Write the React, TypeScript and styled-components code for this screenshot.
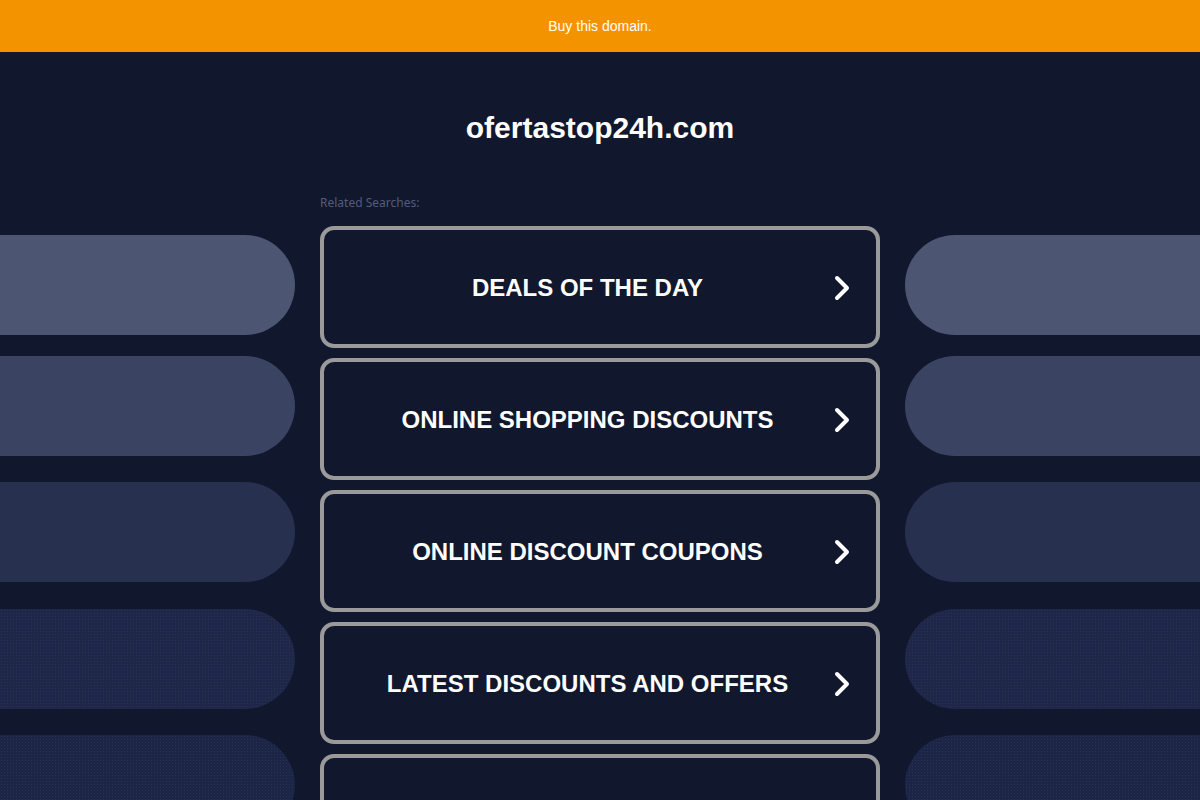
import React from 'react';
import styled, { createGlobalStyle } from 'styled-components';

const GlobalStyle = createGlobalStyle`
  html, body {
    margin: 0;
    padding: 0;
    background: #11172c;
    overflow: hidden;
  }
`;

const Page = styled.div`
  width: 1200px;
  height: 800px;
  overflow: hidden;
  background: #11172c;
  font-family: 'Liberation Sans', Arial, sans-serif;
`;

const TopBar = styled.div`
  height: 52px;
  background: #f39300;
  display: flex;
  align-items: center;
  justify-content: center;
  color: #fff;
  font-size: 14px;
`;

const Domain = styled.h1`
  margin: 0;
  padding-top: 59px;
  height: 34px;
  line-height: 34px;
  text-align: center;
  color: #fff;
  font-size: 30px;
  font-weight: 700;
`;

const Main = styled.div`
  display: grid;
  grid-template-columns: 1fr 560px 1fr;
  column-gap: 25px;
  margin-top: 50px;
`;

const Side = styled.div`
  display: flex;
  flex-direction: column;
  padding-top: 40px;
`;

const Pill = styled.div<{ $color: string; $side: 'left' | 'right'; $top: number; $dots?: boolean }>`
  height: 100px;
  margin-top: ${(p) => p.$top}px;
  background-color: ${(p) => p.$color};
  background-image: ${(p) =>
    p.$dots ? 'radial-gradient(rgba(60, 75, 120, 0.35) 0.6px, transparent 0.8px)' : 'none'};
  background-size: 3px 3px;
  border-radius: ${(p) => (p.$side === 'left' ? '0 50px 50px 0' : '50px 0 0 50px')};
`;

const Center = styled.div`
  display: flex;
  flex-direction: column;
`;

const Label = styled.div`
  font-family: 'Noto Sans', 'Open Sans', sans-serif;
  font-size: 12px;
  line-height: 16px;
  color: #525c7c;
  margin-bottom: 15px;
`;

const Results = styled.div`
  display: flex;
  flex-direction: column;
  gap: 10px;
`;

const ResultBox = styled.a`
  box-sizing: border-box;
  height: 122px;
  border: 4px solid #9a9a9a;
  border-radius: 14px;
  display: flex;
  align-items: center;
  padding: 2px 25px 0 26px;
  text-decoration: none;
  cursor: pointer;
`;

const ResultText = styled.span`
  flex: 1;
  margin-right: 8px;
  text-align: center;
  color: #fff;
  font-size: 24px;
  font-weight: 700;
`;

const Chevron = () => (
  <svg width="18" height="26" viewBox="0 0 18 26">
    <polyline
      points="4,3 14,13 4,23"
      fill="none"
      stroke="#fff"
      strokeWidth="4"
      strokeLinecap="round"
      strokeLinejoin="round"
    />
  </svg>
);

const pills = [
  { color: '#4c5672', top: 0 },
  { color: '#3a4361', top: 21 },
  { color: '#283050', top: 26 },
  { color: '#1e2748', top: 27, dots: true },
  { color: '#1c2545', top: 26, dots: true },
];

const searches = [
  'DEALS OF THE DAY',
  'ONLINE SHOPPING DISCOUNTS',
  'ONLINE DISCOUNT COUPONS',
  'LATEST DISCOUNTS AND OFFERS',
  'BEST ONLINE DEALS',
];

const App = () => {
  return (
    <Page>
      <GlobalStyle />
      <TopBar>Buy this domain.</TopBar>
      <Domain>ofertastop24h.com</Domain>
      <Main>
        <Side>
          {pills.map((p, i) => (
            <Pill key={i} $color={p.color} $top={p.top} $dots={p.dots} $side='left' />
          ))}
        </Side>
        <Center>
          <Label>Related Searches:</Label>
          <Results>
            {searches.map((s) => (
              <ResultBox key={s}>
                <ResultText>{s}</ResultText>
                <Chevron />
              </ResultBox>
            ))}
          </Results>
        </Center>
        <Side>
          {pills.map((p, i) => (
            <Pill key={i} $color={p.color} $top={p.top} $dots={p.dots} $side='right' />
          ))}
        </Side>
      </Main>
    </Page>
  );
};

export default App;
